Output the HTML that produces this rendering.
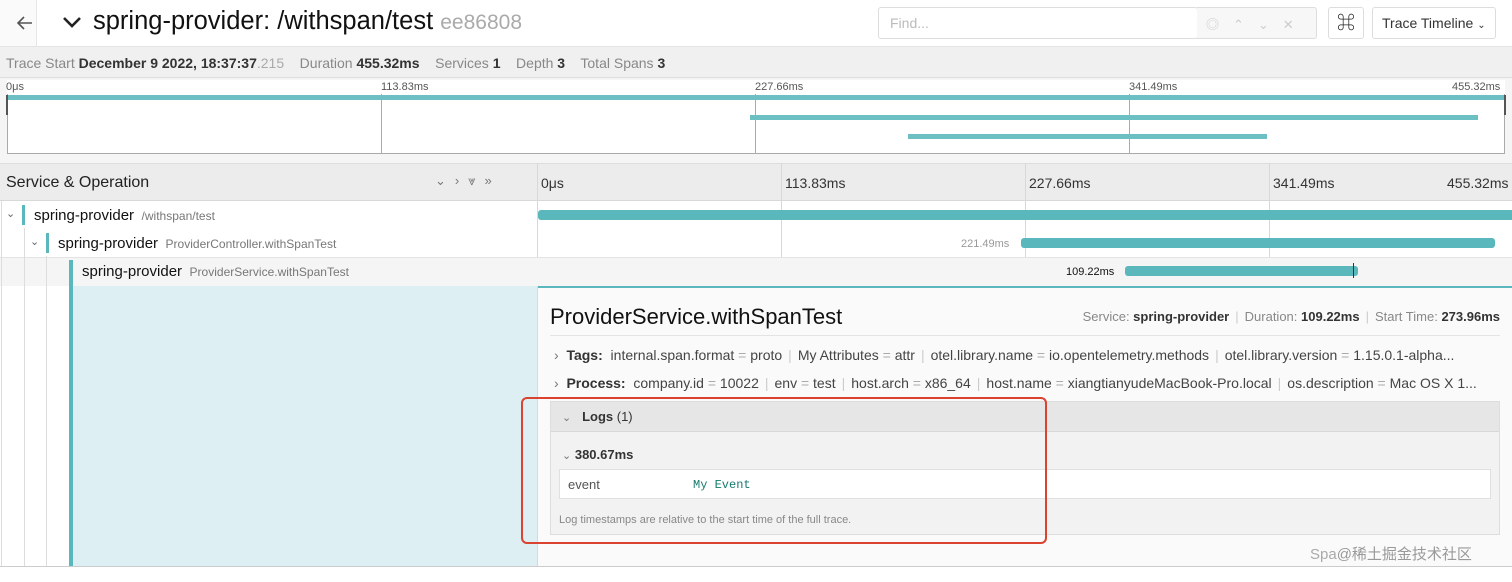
<!DOCTYPE html>
<html><head><meta charset="utf-8"><style>
*{margin:0;padding:0;box-sizing:border-box}
body{width:1512px;height:582px;position:relative;overflow:hidden;background:#fff;font-family:"Liberation Sans","Noto Sans CJK SC",sans-serif;color:#222}
.a{position:absolute;white-space:nowrap}
.g{color:#888}
.b{font-weight:bold;color:#333}
.t{background:#5ab8bd;position:absolute}
.vl{position:absolute;width:1px;background:#ccc}
.sep{color:#ccc;margin:0 6px}
</style></head><body>
<!-- header -->
<div class="a" style="left:0;top:0;width:37px;height:46px;border-right:1px solid #e6e6e6;background:#fafafa"></div>
<svg class="a" style="left:16px;top:14px" width="18" height="18"><path d="M16 9 H2 M8 3 L2 9 L8 15" stroke="#555" stroke-width="1.6" fill="none"/></svg>
<svg class="a" style="left:62px;top:15px" width="20" height="14"><path d="M2 3 L10 11 L18 3" stroke="#222" stroke-width="2.6" fill="none"/></svg>
<div class="a" style="left:93px;top:7px;font-size:25.5px;color:#111">spring-provider: /withspan/test <span style="color:#aaa;font-size:21px">ee86808</span></div>
<div class="a" style="left:878px;top:7px;width:320px;height:32px;border:1px solid #ddd;border-radius:3px;background:#fff"></div>
<div class="a" style="left:890px;top:15px;font-size:14px;color:#bbb">Find...</div>
<div class="a" style="left:1197px;top:7px;width:120px;height:32px;border:1px solid #ddd;border-left:none;background:#f7f7f7;border-radius:0 3px 3px 0"></div>
<div class="a" style="left:1206px;top:14px;font-size:13px;color:#ccc;letter-spacing:14px">◎⌃⌄✕</div>
<div class="a" style="left:1328px;top:7px;width:36px;height:32px;border:1px solid #ddd;border-radius:3px;font-size:18px;text-align:center;line-height:30px">⌘</div>
<div class="a" style="left:1372px;top:7px;width:124px;height:32px;border:1px solid #ddd;border-radius:3px;font-size:14px;line-height:30px;padding-left:9px;color:#333">Trace Timeline <span style="font-size:10px">⌄</span></div>
<!-- subheader -->
<div class="a" style="left:0;top:46px;width:1512px;height:32px;background:#f0f0f0;border-top:1px solid #e4e4e4;border-bottom:1px solid #ddd"></div>
<div class="a g" style="left:6px;top:55px;font-size:14px">Trace Start <span class="b">December 9 2022, 18:37:37</span><span style="color:#aaa">.215</span>&nbsp;&nbsp;&nbsp; Duration <span class="b">455.32ms</span>&nbsp;&nbsp;&nbsp; Services <span class="b">1</span>&nbsp;&nbsp;&nbsp; Depth <span class="b">3</span>&nbsp;&nbsp;&nbsp; Total Spans <span class="b">3</span></div>
<!-- minimap -->
<div class="a" style="left:0;top:78px;width:1512px;height:85px;background:#f5f5f5"></div>
<div class="a" style="left:7px;top:80px;width:1498px;height:14px;background:#fff"></div>
<div class="a" style="left:7px;top:94px;width:1498px;height:60px;background:#fff;border:1px solid #aaa;border-top:none"></div>
<div class="a g" style="left:6px;top:81px;font-size:11px;color:#555">0μs</div>
<div class="a" style="left:381px;top:81px;font-size:11px;color:#555">113.83ms</div>
<div class="a" style="left:755px;top:81px;font-size:11px;color:#555">227.66ms</div>
<div class="a" style="left:1129px;top:81px;font-size:11px;color:#555">341.49ms</div>
<div class="a" style="left:1452px;top:81px;font-size:11px;color:#555">455.32ms</div>
<div class="vl" style="left:381px;top:94px;height:60px;background:#aaa"></div>
<div class="vl" style="left:755px;top:94px;height:60px;background:#aaa"></div>
<div class="vl" style="left:1129px;top:94px;height:60px;background:#aaa"></div>
<div class="t" style="left:7px;top:95px;width:1498px;height:5px;background:#6cc0c3"></div>
<div class="a" style="left:6px;top:95px;width:2px;height:20px;background:#555"></div>
<div class="a" style="left:1504px;top:95px;width:2px;height:20px;background:#555"></div>
<div class="t" style="left:750px;top:115px;width:728px;height:5px;background:#6cc0c3"></div>
<div class="t" style="left:908px;top:134px;width:359px;height:5px;background:#6cc0c3"></div>
<!-- column header -->
<div class="a" style="left:0;top:163px;width:1512px;height:38px;background:#ececec;border-top:1px solid #ddd;border-bottom:1px solid #d8d8d8"></div>
<div class="a" style="left:6px;top:174px;font-size:16px;color:#222">Service &amp; Operation</div>
<div class="a" style="left:435px;top:173px;font-size:13px;color:#777;letter-spacing:9px">⌄›⩔»</div>
<div class="vl" style="left:537px;top:163px;height:403px;background:#d8d8d8"></div>
<div class="a" style="left:541px;top:175px;font-size:14px;color:#333">0μs</div>
<div class="vl" style="left:781px;top:163px;height:123px;background:#d8d8d8"></div>
<div class="vl" style="left:1025px;top:163px;height:123px;background:#d8d8d8"></div>
<div class="vl" style="left:1269px;top:163px;height:123px;background:#d8d8d8"></div>
<div class="a" style="left:785px;top:175px;font-size:14px;color:#333">113.83ms</div>
<div class="a" style="left:1029px;top:175px;font-size:14px;color:#333">227.66ms</div>
<div class="a" style="left:1273px;top:175px;font-size:14px;color:#333">341.49ms</div>
<div class="a" style="left:1447px;top:175px;font-size:14px;color:#333">455.32ms</div>
<!-- rows -->
<div class="a" style="left:0;top:257px;width:1512px;height:29px;background:#f5f5f5;border-top:1px solid #e4e4e4"></div>
<div class="a" style="left:6px;top:207px;font-size:11px;color:#666">⌄</div>
<div class="a" style="left:22px;top:205px;width:3px;height:20px;background:#5ab8bd"></div>
<div class="a" style="left:34px;top:207px;font-size:15px;color:#111">spring-provider <span style="font-size:12px;color:#777">&nbsp;/withspan/test</span></div>
<div class="vl" style="left:24px;top:228px;height:338px;background:#ddd"></div>
<div class="a" style="left:30px;top:235px;font-size:11px;color:#666">⌄</div>
<div class="a" style="left:46px;top:233px;width:3px;height:20px;background:#5ab8bd"></div>
<div class="a" style="left:58px;top:235px;font-size:15px;color:#111">spring-provider <span style="font-size:12px;color:#777">&nbsp;ProviderController.withSpanTest</span></div>
<div class="vl" style="left:46px;top:256px;height:310px;background:#ddd"></div>
<div class="vl" style="left:1px;top:201px;height:365px;background:#ddd"></div>
<div class="a" style="left:69px;top:260px;width:4px;height:306px;background:#5ab8bd"></div>
<div class="a" style="left:82px;top:263px;font-size:15px;color:#111">spring-provider <span style="font-size:12px;color:#777">&nbsp;ProviderService.withSpanTest</span></div>
<div class="t" style="left:538px;top:210px;width:974px;height:10px;border-radius:3px 0 0 3px"></div>
<div class="a" style="left:961px;top:238px;font-size:11px;color:#999">221.49ms</div>
<div class="t" style="left:1021px;top:238px;width:474px;height:10px;border-radius:3px"></div>
<div class="a" style="left:1066px;top:266px;font-size:11px;color:#111">109.22ms</div>
<div class="t" style="left:1125px;top:266px;width:233px;height:10px;border-radius:3px"></div>
<div class="a" style="left:1353px;top:263px;width:1px;height:15px;background:#333"></div>
<!-- detail -->
<div class="a" style="left:73px;top:286px;width:464px;height:280px;background:#ddeff2"></div>
<div class="a" style="left:538px;top:286px;width:974px;height:280px;background:#fafafa"></div>
<div class="a" style="left:538px;top:286px;width:974px;height:2px;background:#5ab8bd"></div>
<div class="a" style="left:0;top:566px;width:1512px;height:1px;background:#ccc"></div>
<div class="a" style="left:550px;top:304px;font-size:22px;color:#111">ProviderService.withSpanTest</div>
<div class="a g" style="right:12px;top:309px;font-size:13px">Service: <span class="b">spring-provider</span><span class="sep">|</span>Duration: <span class="b">109.22ms</span><span class="sep">|</span>Start Time: <span class="b">273.96ms</span></div>
<div class="a" style="left:550px;top:335px;width:950px;height:1px;background:#e4e4e4"></div>
<div class="a" style="left:554px;top:347px;font-size:14px;color:#444"><span style="color:#777">›</span>&nbsp; <b style="color:#333">Tags:</b>&nbsp; internal.span.format<span style="color:#aaa"> = </span>proto<span class="sep">|</span>My Attributes<span style="color:#aaa"> = </span>attr<span class="sep">|</span>otel.library.name<span style="color:#aaa"> = </span>io.opentelemetry.methods<span class="sep">|</span>otel.library.version<span style="color:#aaa"> = </span>1.15.0.1-alpha...</div>
<div class="a" style="left:554px;top:375px;font-size:14px;color:#444"><span style="color:#777">›</span>&nbsp; <b style="color:#333">Process:</b>&nbsp; company.id<span style="color:#aaa"> = </span>10022<span class="sep">|</span>env<span style="color:#aaa"> = </span>test<span class="sep">|</span>host.arch<span style="color:#aaa"> = </span>x86_64<span class="sep">|</span>host.name<span style="color:#aaa"> = </span>xiangtianyudeMacBook-Pro.local<span class="sep">|</span>os.description<span style="color:#aaa"> = </span>Mac OS X 1...</div>
<div class="a" style="left:550px;top:401px;width:950px;height:134px;background:#f2f2f2;border:1px solid #ddd"></div>
<div class="a" style="left:551px;top:402px;width:948px;height:30px;background:#e6e6e6;border-bottom:1px solid #d8d8d8"></div>
<div class="a" style="left:562px;top:409px;font-size:13px;color:#333"><span style="color:#777;font-size:11px">⌄</span>&nbsp;&nbsp; <b>Logs</b> (1)</div>
<div class="a" style="left:562px;top:447px;font-size:13px;color:#333"><span style="color:#777;font-size:11px">⌄</span> <b>380.67ms</b></div>
<div class="a" style="left:559px;top:469px;width:932px;height:30px;background:#fff;border:1px solid #e0e0e0"></div>
<div class="a" style="left:568px;top:477px;font-size:13px;color:#555">event</div>
<div class="a" style="left:693px;top:478px;font-size:12px;color:#167a6e;font-family:'Liberation Mono',monospace">My Event</div>
<div class="a" style="left:559px;top:514px;font-size:11px;color:#888">Log timestamps are relative to the start time of the full trace.</div>
<div class="a" style="left:521px;top:397px;width:526px;height:147px;border:2px solid #d9432f;border-radius:6px"></div>
<div class="a" style="left:1310px;top:543px;font-size:15px;color:#aaa">Spa<span style="color:#999">@稀土掘金技术社区</span></div>
</body></html>
